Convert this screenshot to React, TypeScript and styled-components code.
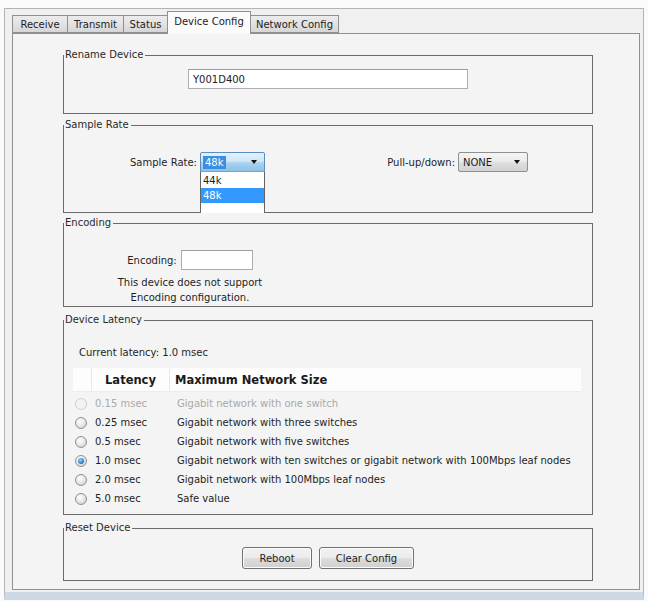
import React from "react";
import styled, { createGlobalStyle } from "styled-components";

const UI_FONT = `"DejaVu Sans", "Liberation Sans", Arial, sans-serif`;

const Global = createGlobalStyle`
  html, body { margin: 0; padding: 0; background: #fafafa; }
  body { font-family: ${UI_FONT}; font-size: 10px; color: #1e1e1e; }
  * { box-sizing: border-box; }
`;

const Window = styled.div`
  margin: 8px 4px 0 4px;
  width: 640px;
  height: 592px;
  border: 1px solid #b4b4b4;
  border-bottom: 8px solid #cdd8e4;
  background: #f0f0f0;
  padding: 3px 3px 2px 7px;
  display: flex;
  flex-direction: column;
`;

const TabStrip = styled.div`
  display: flex;
  align-items: flex-end;
  height: 21px;
  position: relative;
  z-index: 1;
`;

const Tab = styled.div<{ $w: number; $active?: boolean }>`
  width: ${(p) => p.$w}px;
  height: ${(p) => (p.$active ? 23 : 18)}px;
  margin-left: -1px;
  margin-bottom: ${(p) => (p.$active ? -1 : 0)}px;
  border: 1px solid #8e9096;
  border-bottom: ${(p) => (p.$active ? "none" : "1px solid #8e9096")};
  background: ${(p) =>
    p.$active ? "#fbfbfb" : "linear-gradient(#ececec 0%, #e2e2e2 50%, #d6d6d6 100%)"};
  display: flex;
  align-items: center;
  justify-content: center;
  color: #1e1e1e;
  white-space: nowrap;
  padding-bottom: ${(p) => (p.$active ? 3 : 0)}px;
  &:first-child { margin-left: 0; }
`;

const Panel = styled.div`
  flex: 1;
  border: 1px solid #8e9096;
  background: #f4f4f4;
  padding: 15px 46px 0 50px;
  display: flex;
  flex-direction: column;
`;

const Group = styled.fieldset<{ $h: number; $mt: number }>`
  margin: ${(p) => p.$mt}px 0 0 0;
  padding: 0;
  min-width: 0;
  height: ${(p) => p.$h}px;
  border: 1px solid #6a6a6a;
  display: flex;
  flex-direction: column;
`;

const Legend = styled.legend`
  padding: 0 2px 0 1px;
  margin: 0;
  line-height: 12px;
  color: #2a2a2a;
`;

const CenterRow = styled.div<{ $mt: number; $gap?: number }>`
  margin-top: ${(p) => p.$mt}px;
  display: flex;
  justify-content: center;
  gap: ${(p) => p.$gap ?? 0}px;
`;

const TextInput = styled.div<{ $w: number }>`
  width: ${(p) => p.$w}px;
  height: 20px;
  border: 1px solid #abadb3;
  border-top-color: #9a9ca3;
  background: #fff;
  padding-left: 4px;
  display: flex;
  align-items: center;
  color: #222;
`;

const FieldRow = styled.div<{ $mt: number }>`
  margin-top: ${(p) => p.$mt}px;
  display: flex;
  align-items: center;
`;

const FieldLabel = styled.span<{ $w: number }>`
  width: ${(p) => p.$w}px;
  text-align: right;
  padding-right: 3px;
  white-space: nowrap;
`;

const Combo = styled.div<{ $w: number; $active?: boolean }>`
  position: relative;
  width: ${(p) => p.$w}px;
  height: 20px;
  border: 1px solid ${(p) => (p.$active ? "#5a8dbb" : "#8e8f8f")};
  border-radius: 2px;
  background: ${(p) =>
    p.$active
      ? "linear-gradient(#e3f1fb 0%, #cfe7f8 45%, #a9d2f0 55%, #8fc1e6 100%)"
      : "linear-gradient(#f4f4f4 0%, #ececec 45%, #dedede 55%, #d2d2d2 100%)"};
  display: flex;
  align-items: center;
  padding: 0 7px 0 2px;
`;

const ComboText = styled.span<{ $sel?: boolean }>`
  padding: 1px 2px;
  color: ${(p) => (p.$sel ? "#fff" : "#1e1e1e")};
  background: ${(p) => (p.$sel ? "#3c8ee0" : "transparent")};
`;

const Arrow = styled.span`
  margin-left: auto;
  width: 0;
  height: 0;
  border-left: 3.5px solid transparent;
  border-right: 3.5px solid transparent;
  border-top: 4px solid #111;
`;

const DropList = styled.div`
  position: absolute;
  z-index: 5;
  top: 100%;
  left: -1px;
  width: 65px;
  height: 42px;
  background: #fff;
  border: 1px solid #646464;
  border-top-color: #9a9a9a;
  border-bottom: none;
  padding-top: 1px;
`;

const DropItem = styled.div<{ $sel?: boolean }>`
  height: 15px;
  line-height: 15px;
  padding-left: 2px;
  color: ${(p) => (p.$sel ? "#fff" : "#1e1e1e")};
  background: ${(p) => (p.$sel ? "#3399ff" : "transparent")};
`;

const EncodingBlock = styled.div`
  margin: 21px 0 0 46px;
  width: 160px;
  display: flex;
  flex-direction: column;
  align-items: center;
`;

const EncodingRow = styled.div`
  display: flex;
  align-items: center;
  gap: 4px;
`;

const Note = styled.div`
  margin-top: 5px;
  text-align: center;
  line-height: 15px;
  white-space: nowrap;
`;

const CurrentLatency = styled.div`
  margin: 20px 0 0 15px;
  line-height: 14px;
`;

const Table = styled.div`
  margin: 8px 11px 0 9px;
  display: flex;
  flex-direction: column;
`;

const HeaderRow = styled.div`
  height: 24px;
  display: grid;
  grid-template-columns: 19px 78px 1fr;
  background: #fdfdfd;
  border-bottom: 1px solid #ececec;
  margin-bottom: 2px;
`;

const HeaderCell = styled.div<{ $center?: boolean; $sep?: boolean }>`
  display: flex;
  align-items: center;
  justify-content: ${(p) => (p.$center ? "center" : "flex-start")};
  padding-left: ${(p) => (p.$center ? 0 : 5)}px;
  border-right: ${(p) => (p.$sep ? "1px solid #e8e8e8" : "none")};
  font-family: "DejaVu Sans", sans-serif;
  font-weight: bold;
  font-size: 11.5px;
  color: #1a1a1a;
`;

const Row = styled.div<{ $disabled?: boolean }>`
  height: 19px;
  display: grid;
  grid-template-columns: 19px 78px 1fr;
  align-items: center;
  color: ${(p) => (p.$disabled ? "#a9a9a9" : "#1e1e1e")};
  white-space: nowrap;
`;

const Radio = styled.span<{ $checked?: boolean; $disabled?: boolean }>`
  margin-left: 2px;
  width: 12px;
  height: 12px;
  border-radius: 50%;
  border: 1px solid ${(p) => (p.$disabled ? "#cfcfcf" : "#8f9194")};
  background: ${(p) =>
    p.$disabled
      ? "#f3f3f3"
      : "radial-gradient(circle at 40% 35%, #ffffff 0%, #e6e6e6 50%, #c8c8c8 100%)"};
  display: flex;
  align-items: center;
  justify-content: center;
  &::after {
    content: "";
    display: ${(p) => (p.$checked ? "block" : "none")};
    width: 6px;
    height: 6px;
    border-radius: 50%;
    background: radial-gradient(circle at 40% 35%, #9fd0f5 0%, #2f7fd0 60%, #1b4f95 100%);
  }
`;

const LatencyCell = styled.span`
  padding-left: 3px;
`;

const DescCell = styled.span`
  padding-left: 7px;
`;

const Button = styled.button<{ $w: number }>`
  width: ${(p) => p.$w}px;
  height: 22px;
  border: 1px solid #707070;
  border-radius: 3px;
  background: linear-gradient(#f2f2f2 0%, #ebebeb 48%, #dddddd 52%, #cfcfcf 100%);
  box-shadow: inset 0 0 0 1px #fcfcfc;
  font-family: ${UI_FONT};
  font-size: 10px;
  color: #1e1e1e;
  padding: 0;
`;

const tabs = [
  { label: "Receive", w: 56 },
  { label: "Transmit", w: 57 },
  { label: "Status", w: 45 },
  { label: "Device Config", w: 84, active: true },
  { label: "Network Config", w: 89 },
];

const latencies = [
  { v: "0.15 msec", d: "Gigabit network with one switch", disabled: true },
  { v: "0.25 msec", d: "Gigabit network with three switches" },
  { v: "0.5 msec", d: "Gigabit network with five switches" },
  {
    v: "1.0 msec",
    d: "Gigabit network with ten switches or gigabit network with 100Mbps leaf nodes",
    checked: true,
  },
  { v: "2.0 msec", d: "Gigabit network with 100Mbps leaf nodes" },
  { v: "5.0 msec", d: "Safe value" },
];

export default function App() {
  return (
    <>
      <Global />
      <Window>
        <TabStrip>
          {tabs.map((t) => (
            <Tab key={t.label} $w={t.w} $active={t.active}>
              {t.label}
            </Tab>
          ))}
        </TabStrip>
        <Panel>
          <Group $h={65} $mt={0}>
            <Legend>Rename Device</Legend>
            <CenterRow $mt={8}>
              <TextInput $w={280}>Y001D400</TextInput>
            </CenterRow>
          </Group>

          <Group $h={94} $mt={5}>
            <Legend>Sample Rate</Legend>
            <FieldRow $mt={21}>
              <FieldLabel $w={136}>Sample Rate:</FieldLabel>
              <Combo $w={65} $active>
                <ComboText $sel>48k</ComboText>
                <Arrow />
                <DropList>
                  <DropItem>44k</DropItem>
                  <DropItem $sel>48k</DropItem>
                </DropList>
              </Combo>
              <FieldLabel $w={193}>Pull-up/down:</FieldLabel>
              <Combo $w={70}>
                <ComboText>NONE</ComboText>
                <Arrow />
              </Combo>
            </FieldRow>
          </Group>

          <Group $h={90} $mt={4}>
            <Legend>Encoding</Legend>
            <EncodingBlock>
              <EncodingRow>
                <span>Encoding:</span>
                <TextInput $w={72} />
              </EncodingRow>
              <Note>
                This device does not support
                <br />
                Encoding configuration.
              </Note>
            </EncodingBlock>
          </Group>

          <Group $h={201} $mt={7}>
            <Legend>Device Latency</Legend>
            <CurrentLatency>Current latency: 1.0 msec</CurrentLatency>
            <Table>
              <HeaderRow>
                <HeaderCell $sep />
                <HeaderCell $center $sep>
                  Latency
                </HeaderCell>
                <HeaderCell>Maximum Network Size</HeaderCell>
              </HeaderRow>
              {latencies.map((l) => (
                <Row key={l.v} $disabled={l.disabled}>
                  <Radio $checked={l.checked} $disabled={l.disabled} />
                  <LatencyCell>{l.v}</LatencyCell>
                  <DescCell>{l.d}</DescCell>
                </Row>
              ))}
            </Table>
          </Group>

          <Group $h={59} $mt={7}>
            <Legend>Reset Device</Legend>
            <CenterRow $mt={13} $gap={7}>
              <Button $w={70}>Reboot</Button>
              <Button $w={95}>Clear Config</Button>
            </CenterRow>
          </Group>
        </Panel>
      </Window>
    </>
  );
}
